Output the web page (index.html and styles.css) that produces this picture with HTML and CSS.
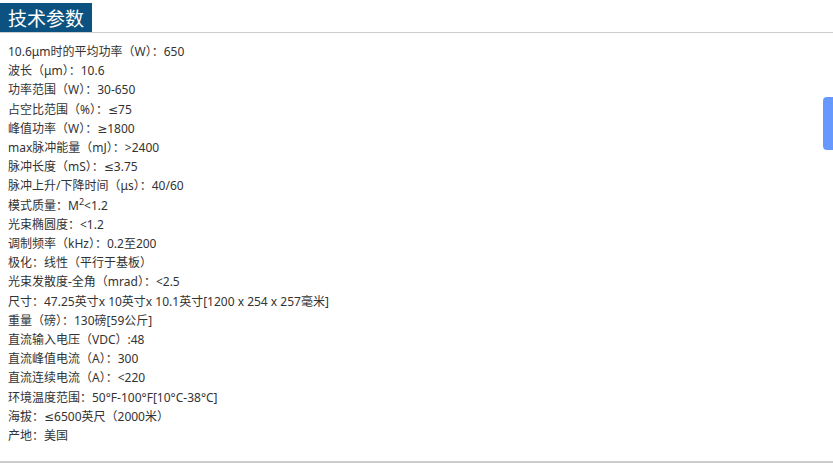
FILE: index.html
```html
<!DOCTYPE html>
<html lang="zh-CN">
<head>
    <meta charset="UTF-8">
    <title>技术参数</title>
    <link rel="stylesheet" href="styles.css">
</head>
<body>
<div class="spec-box">
    <div class="spec-head">
        <h2 class="spec-title">技术参数</h2>
    </div>
    <div class="spec-body">
        <p>10.6μm时的平均功率（W）：650</p>
        <p>波长（μm）：10.6</p>
        <p>功率范围（W）：30-650</p>
        <p>占空比范围（%）：≤75</p>
        <p>峰值功率（W）：≥1800</p>
        <p>max脉冲能量（mJ）：&gt;2400</p>
        <p>脉冲长度（mS）：≤3.75</p>
        <p>脉冲上升/下降时间（μs）：40/60</p>
        <p>模式质量：M<sup>2</sup>&lt;1.2</p>
        <p>光束椭圆度：&lt;1.2</p>
        <p>调制频率（kHz）：0.2至200</p>
        <p>极化：线性（平行于基板）</p>
        <p>光束发散度-全角（mrad）：&lt;2.5</p>
        <p>尺寸：47.25英寸x 10英寸x 10.1英寸[1200 x 254 x 257毫米]</p>
        <p>重量（磅）：130磅[59公斤]</p>
        <p>直流输入电压（VDC）:48</p>
        <p>直流峰值电流（A）：300</p>
        <p>直流连续电流（A）：&lt;220</p>
        <p>环境温度范围：50°F-100°F[10°C-38°C]</p>
        <p>海拔：≤6500英尺（2000米）</p>
        <p>产地：美国</p>
    </div>
</div>
<div class="side-tab"></div>
</body>
</html>
```

FILE: styles.css
```css
body {
    margin: 0;
    padding-top: 3px;
    background-color: #fff;
    font-family: "Noto Sans", "DejaVu Sans", "Noto Sans CJK JP", sans-serif;
    color: #333;
}
.spec-box {
    border-bottom: 2px solid #ccc;
}
.spec-head {
    border-bottom: 1px solid #ccc;
}
.spec-title {
    display: inline-block;
    margin: 0;
    padding: 0 8px;
    height: 29px;
    line-height: 29px;
    font-family: "Noto Sans CJK SC", sans-serif;
    font-size: 19px;
    font-weight: normal;
    color: #fff;
    background-color: #0b5281;
}
.spec-body {
    padding: 9px 8px 16px;
}
.spec-body p {
    margin: 0;
    font-size: 12px;
    line-height: 19.2px;
}
.spec-body sup {
    font-size: 9px;
    line-height: 0;
}
.side-tab {
    position: fixed;
    right: 0;
    top: 97px;
    width: 10px;
    height: 53px;
    background-color: #6699ff;
    border-radius: 4px 0 0 4px;
}
```
